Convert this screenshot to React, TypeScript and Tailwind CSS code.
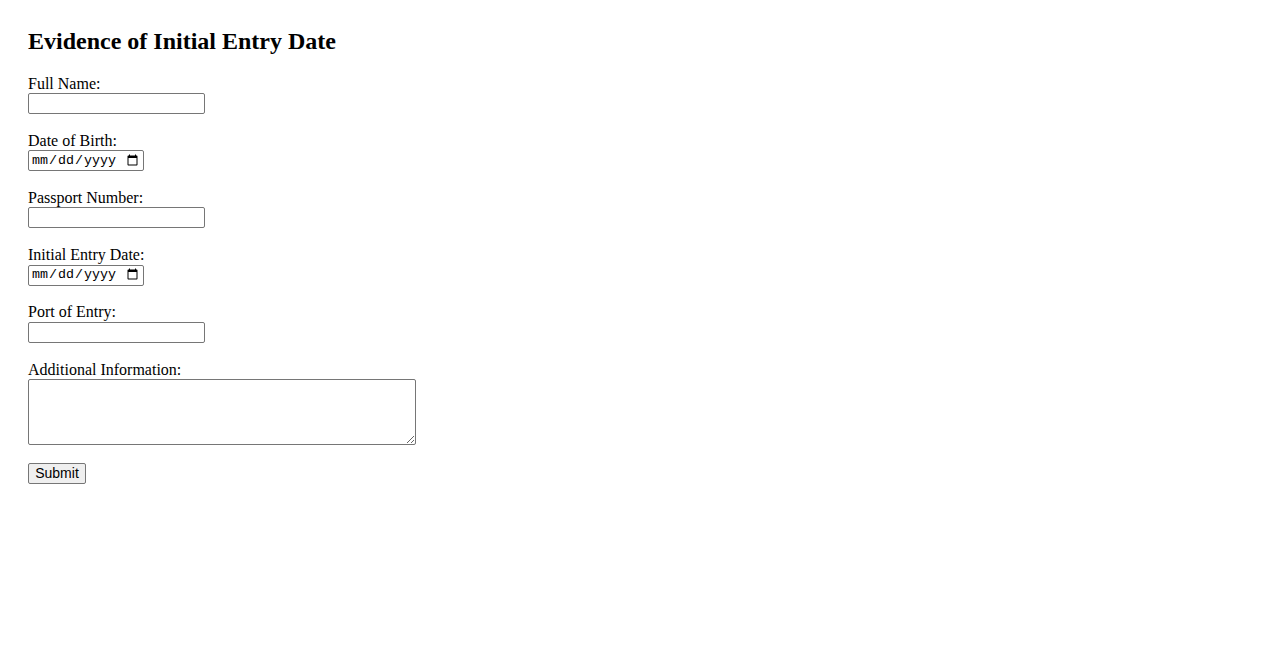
import React from 'react';

const fields: { label: string; type: 'text' | 'date' }[] = [
  { label: 'Full Name:', type: 'text' },
  { label: 'Date of Birth:', type: 'date' },
  { label: 'Passport Number:', type: 'text' },
  { label: 'Initial Entry Date:', type: 'date' },
  { label: 'Port of Entry:', type: 'text' },
];

const App: React.FC = () => {
  return (
    <div className="min-h-screen bg-white text-black p-[28px] font-['Liberation_Serif','Times_New_Roman',serif]">
      <h2 className="text-[24px] font-bold leading-[26px] mb-[20.6px]">Evidence of Initial Entry Date</h2>

      <form onSubmit={e => e.preventDefault()}>
        {fields.map(f => (
          <div key={f.label} className="mb-[17.8px]">
            <label className="block text-[16px] leading-[18.4px]">{f.label}</label>
            {f.type === 'text' ? (
              <input
                type="text"
                className="block w-[177px] h-[21px] border border-[#767676] rounded-[2px] px-[2px] py-[1px] bg-white text-[13.33px] font-['Liberation_Sans',Arial,sans-serif]"
              />
            ) : (
              <input
                type="date"
                className="block w-[116px] h-[21px] border border-[#767676] rounded-[2px] px-[2px] py-[1px] bg-white text-[13.33px] leading-[16px] font-['Liberation_Mono','Courier_New',monospace]"
              />
            )}
          </div>
        ))}

        <div className="mb-[17.8px]">
          <label className="block text-[16px] leading-[18.4px]">Additional Information:</label>
          <textarea className="block w-[388px] h-[66px] border border-[#767676] rounded-[2px] p-[2px] bg-white text-[13.33px] font-['Liberation_Mono',monospace] resize" />
        </div>

        <button
          type="submit"
          className="block w-[58px] h-[21px] border border-[#767676] rounded-[2px] bg-[#efefef] text-[14px] leading-[17px] text-center font-['Liberation_Sans',Arial,sans-serif] text-black"
        >
          Submit
        </button>
      </form>
    </div>
  );
};

export default App;
